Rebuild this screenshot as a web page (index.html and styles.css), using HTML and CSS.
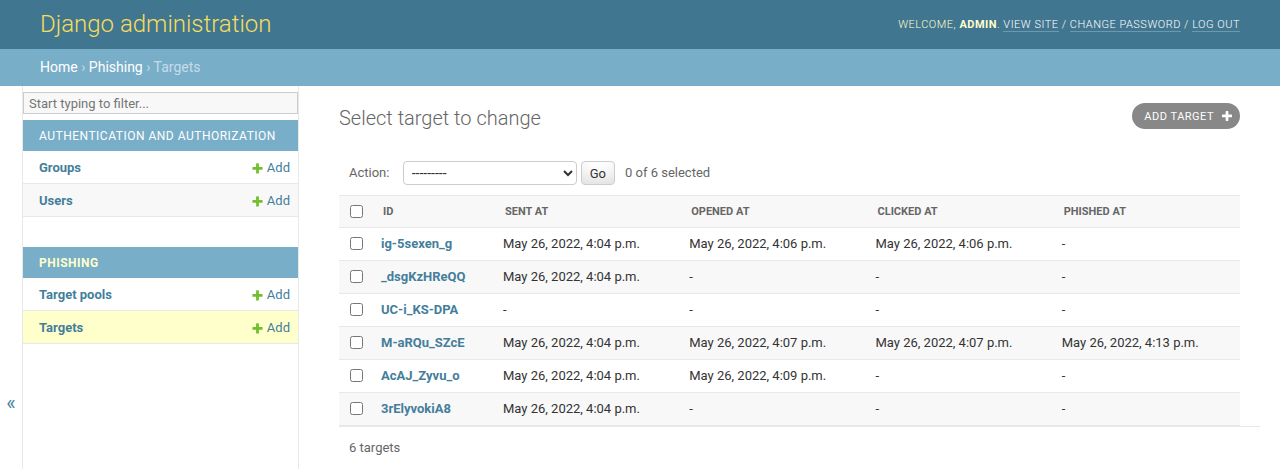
FILE: index.html
```html
<!DOCTYPE html>
<html lang="en">
<head>
<meta charset="utf-8">
<title>Select target to change | Django site admin</title>
<link rel="stylesheet" href="styles.css">
</head>
<body>
<div class="container">
  <header class="header">
    <div class="branding"><h1 class="site-name"><a href="#">Django administration</a></h1></div>
    <div class="user-tools">Welcome, <strong>admin</strong>. <a href="#">View site</a> / <a href="#">Change password</a> / <a href="#">Log out</a></div>
  </header>
  <nav class="breadcrumbs"><a href="#">Home</a> › <a href="#">Phishing</a> › Targets</nav>
  <div class="main">
    <button class="toggle-nav" type="button" aria-label="Toggle navigation">«</button>
    <nav class="nav-sidebar">
      <input class="nav-filter" type="search" placeholder="Start typing to filter...">
      <div class="app-module">
        <div class="app-caption"><a href="#">Authentication and Authorization</a></div>
        <div class="app-row"><a class="model-link" href="#">Groups</a><a class="addlink" href="#"><svg class="plus" viewBox="0 0 1792 1792"><path fill="#70bf2b" d="M1600 796v192q0 40-28 68t-68 28h-416v416q0 40-28 68t-68 28h-192q-40 0-68-28t-28-68v-416h-416q-40 0-68-28t-28-68v-192q0-40 28-68t68-28h416v-416q0-40 28-68t68-28h192q40 0 68 28t28 68v416h416q40 0 68 28t28 68z"/></svg>Add</a></div>
        <div class="app-row alt"><a class="model-link" href="#">Users</a><a class="addlink" href="#"><svg class="plus" viewBox="0 0 1792 1792"><path fill="#70bf2b" d="M1600 796v192q0 40-28 68t-68 28h-416v416q0 40-28 68t-68 28h-192q-40 0-68-28t-28-68v-416h-416q-40 0-68-28t-28-68v-192q0-40 28-68t68-28h416v-416q0-40 28-68t68-28h192q40 0 68 28t28 68v416h416q40 0 68 28t28 68z"/></svg>Add</a></div>
      </div>
      <div class="app-module current-app">
        <div class="app-caption"><a href="#">Phishing</a></div>
        <div class="app-row"><a class="model-link" href="#">Target pools</a><a class="addlink" href="#"><svg class="plus" viewBox="0 0 1792 1792"><path fill="#70bf2b" d="M1600 796v192q0 40-28 68t-68 28h-416v416q0 40-28 68t-68 28h-192q-40 0-68-28t-28-68v-416h-416q-40 0-68-28t-28-68v-192q0-40 28-68t68-28h416v-416q0-40 28-68t68-28h192q40 0 68 28t28 68v416h416q40 0 68 28t28 68z"/></svg>Add</a></div>
        <div class="app-row current-model"><a class="model-link" href="#">Targets</a><a class="addlink" href="#"><svg class="plus" viewBox="0 0 1792 1792"><path fill="#70bf2b" d="M1600 796v192q0 40-28 68t-68 28h-416v416q0 40-28 68t-68 28h-192q-40 0-68-28t-28-68v-416h-416q-40 0-68-28t-28-68v-192q0-40 28-68t68-28h416v-416q0-40 28-68t68-28h192q40 0 68 28t28 68v416h416q40 0 68 28t28 68z"/></svg>Add</a></div>
      </div>
    </nav>
    <main class="content">
      <div class="content-head">
        <h1 class="page-title">Select target to change</h1>
        <a class="object-tool" href="#">Add target<svg class="plus-white" viewBox="192 192 1408 1408"><path fill="#ffffff" d="M1600 796v192q0 40-28 68t-68 28h-416v416q0 40-28 68t-68 28h-192q-40 0-68-28t-28-68v-416h-416q-40 0-68-28t-28-68v-192q0-40 28-68t68-28h416v-416q0-40 28-68t68-28h192q40 0 68 28t28 68v416h416q40 0 68 28t28 68z"/></svg></a>
      </div>
      <form class="changelist">
        <div class="actions">
          <label>Action: <select class="action-select"><option>---------</option><option>Delete selected targets</option></select></label>
          <button class="go-button" type="button">Go</button>
          <span class="action-counter">0 of 6 selected</span>
        </div>
        <table class="result-list">
          <thead>
            <tr>
              <th class="col-check"><input type="checkbox" class="cb"></th>
              <th class="col-id">ID</th>
              <th>Sent at</th>
              <th>Opened at</th>
              <th>Clicked at</th>
              <th>Phished at</th>
            </tr>
          </thead>
          <tbody>
            <tr><td class="cell-check"><input type="checkbox" class="cb"></td><th class="field-id"><a href="#">ig-5sexen_g</a></th><td>May 26, 2022, 4:04 p.m.</td><td>May 26, 2022, 4:06 p.m.</td><td>May 26, 2022, 4:06 p.m.</td><td>-</td></tr>
            <tr><td class="cell-check"><input type="checkbox" class="cb"></td><th class="field-id"><a href="#">_dsgKzHReQQ</a></th><td>May 26, 2022, 4:04 p.m.</td><td>-</td><td>-</td><td>-</td></tr>
            <tr><td class="cell-check"><input type="checkbox" class="cb"></td><th class="field-id"><a href="#">UC-i_KS-DPA</a></th><td>-</td><td>-</td><td>-</td><td>-</td></tr>
            <tr><td class="cell-check"><input type="checkbox" class="cb"></td><th class="field-id"><a href="#">M-aRQu_SZcE</a></th><td>May 26, 2022, 4:04 p.m.</td><td>May 26, 2022, 4:07 p.m.</td><td>May 26, 2022, 4:07 p.m.</td><td>May 26, 2022, 4:13 p.m.</td></tr>
            <tr><td class="cell-check"><input type="checkbox" class="cb"></td><th class="field-id"><a href="#">AcAJ_Zyvu_o</a></th><td>May 26, 2022, 4:04 p.m.</td><td>May 26, 2022, 4:09 p.m.</td><td>-</td><td>-</td></tr>
            <tr><td class="cell-check"><input type="checkbox" class="cb"></td><th class="field-id"><a href="#">3rElyvokiA8</a></th><td>May 26, 2022, 4:04 p.m.</td><td>-</td><td>-</td><td>-</td></tr>
          </tbody>
        </table>
        <p class="paginator">6 targets</p>
      </form>
    </main>
  </div>
</div>
</body>
</html>
```

FILE: styles.css
```css
* { box-sizing: border-box; }

html, body {
  margin: 0;
  padding: 0;
}

body {
  font-family: Roboto, "Liberation Sans", "DejaVu Sans", sans-serif;
  font-size: 14px;
  color: #333;
  background: #fff;
}

a { text-decoration: none; color: #447e9b; }

/* Header */
.header {
  display: flex;
  justify-content: space-between;
  align-items: center;
  padding: 10px 40px;
  background: #417690;
  color: #ffc;
}

.site-name {
  margin: 0;
  font-size: 24px;
  font-weight: 300;
  line-height: 29px;
}

.site-name a { color: #f5dd5d; }

.user-tools {
  font-size: 11px;
  font-weight: 300;
  letter-spacing: 0.5px;
  text-transform: uppercase;
  text-align: right;
  line-height: 14px;
}

.user-tools strong { font-weight: 700; }

.user-tools a {
  color: #fff;
  border-bottom: 1px solid rgba(255, 255, 255, 0.25);
}

/* Breadcrumbs */
.breadcrumbs {
  background: #79aec8;
  padding: 10px 40px;
  color: #c4dce8;
  font-size: 14px;
  line-height: 17px;
}

.breadcrumbs a { color: #fff; }

/* Main */
.main {
  display: flex;
  min-height: calc(100vh - 86px);
}

.toggle-nav {
  flex: 0 0 23px;
  width: 23px;
  display: flex;
  justify-content: center;
  align-items: flex-start;
  padding: 306px 0 0;
  margin: 0;
  border: 0;
  border-right: 1px solid #e8e8e8;
  background: #fff;
  font-family: inherit;
  font-size: 20px;
  line-height: 23px;
  color: #447e9b;
}

.nav-sidebar {
  flex: 0 0 276px;
  width: 276px;
  min-width: 0;
  overflow: hidden;
  padding-top: 1px;
  border-right: 1px solid #e8e8e8;
}

.nav-filter {
  display: block;
  width: 100%;
  height: 22px;
  margin: 5px 0 6px;
  padding: 2px 5px;
  border: 1px solid #ccc;
  background: #f8f8f8;
  font-family: inherit;
  font-size: 13px;
  color: #333;
  outline: none;
}

.nav-filter::placeholder { color: #757575; }

.app-module { margin-bottom: 30px; }

.app-caption {
  height: 31px;
  background: #79aec8;
  padding: 9px 8px 7px 16px;
  font-size: 12px;
  font-weight: 400;
  line-height: 15px;
  letter-spacing: 0.5px;
  text-transform: uppercase;
  white-space: nowrap;
}

.app-caption a { color: #fff; }

.current-app .app-caption a {
  color: #ffc;
  font-weight: 700;
}

.app-row {
  display: flex;
  justify-content: space-between;
  align-items: flex-start;
  height: 33px;
  padding: 9px 8px 7px 16px;
  border-bottom: 1px solid #e8e8e8;
  font-size: 13px;
  line-height: 16px;
  white-space: nowrap;
}

.app-row.alt { background: #f8f8f8; }

.app-row.current-model { background: #ffc; }

.model-link { font-weight: 700; }

.addlink {
  display: flex;
  align-items: center;
  height: 16px;
  font-weight: 400;
}

.plus {
  width: 13px;
  height: 13px;
  margin-right: 3px;
}

/* Content */
.content {
  flex: 1 1 auto;
  min-width: 0;
  padding: 20px 40px;
}

.content-head {
  display: flex;
  justify-content: space-between;
  align-items: flex-start;
}

.page-title {
  margin: 0 0 21px;
  font-size: 20px;
  font-weight: 300;
  line-height: 24px;
  color: #666;
}

.object-tool {
  display: flex;
  align-items: center;
  margin-top: -3px;
  height: 26px;
  padding: 0 8px 0 12px;
  background: #888;
  color: #fff;
  font-size: 11px;
  font-weight: 400;
  letter-spacing: 0.5px;
  text-transform: uppercase;
  border-radius: 15px;
}

.plus-white {
  width: 10px;
  height: 10px;
  margin-left: 8px;
}

/* Actions bar */
.actions {
  padding: 10px;
  line-height: 24px;
  font-size: 13px;
  color: #666;
  display: flex;
  align-items: center;
}

.action-select {
  width: 174px;
  height: 24px;
  margin: 0 0 0 10px;
  padding: 0 0 0 4px;
  border: 1px solid #ccc;
  border-radius: 4px;
  background: #fff;
  font-family: inherit;
  font-size: 14px;
  color: #333;
  vertical-align: top;
}

.go-button {
  height: 24px;
  margin: 0 0 0 4px;
  padding: 4px 8px;
  border: 1px solid #ccc;
  border-radius: 4px;
  background: #fff;
  box-shadow: 0 -15px 20px -10px rgba(0, 0, 0, 0.15) inset;
  font-family: inherit;
  font-size: 13px;
  line-height: 1;
  color: #333;
}

.action-counter {
  margin: 0 0 0 10px;
  font-size: 13px;
}

/* Result list */
.result-list {
  width: 100%;
  border-collapse: collapse;
  table-layout: fixed;
}

.result-list thead th {
  background: #f8f8f8;
  border-top: 1px solid #e8e8e8;
  border-bottom: 1px solid #e8e8e8;
  padding: 8px 10px;
  font-size: 11px;
  font-weight: 700;
  line-height: 15px;
  color: #666;
  text-transform: uppercase;
  text-align: left;
  white-space: nowrap;
}

.result-list thead th.col-check {
  width: 34px;
  padding: 8px 0;
  text-align: center;
}

.result-list thead th.col-id { width: 122px; }

.result-list tbody td,
.result-list tbody th {
  padding: 8px;
  font-size: 13px;
  line-height: 16px;
  border-bottom: 1px solid #e8e8e8;
  vertical-align: top;
  text-align: left;
  color: #333;
  white-space: nowrap;
}

.result-list tbody th { font-weight: 700; }

.result-list tbody td.cell-check {
  padding: 8px 0;
  text-align: center;
}

.result-list tbody tr:nth-child(even) { background: #f8f8f8; }

.cb {
  width: 13px;
  height: 13px;
  margin: 1px 0 0;
  vertical-align: top;
}

.paginator {
  width: calc(100% + 20px);
  margin: 0;
  padding: 10px;
  border-top: 1px solid #e8e8e8;
  font-size: 13px;
  line-height: 22px;
  color: #666;
}
```
